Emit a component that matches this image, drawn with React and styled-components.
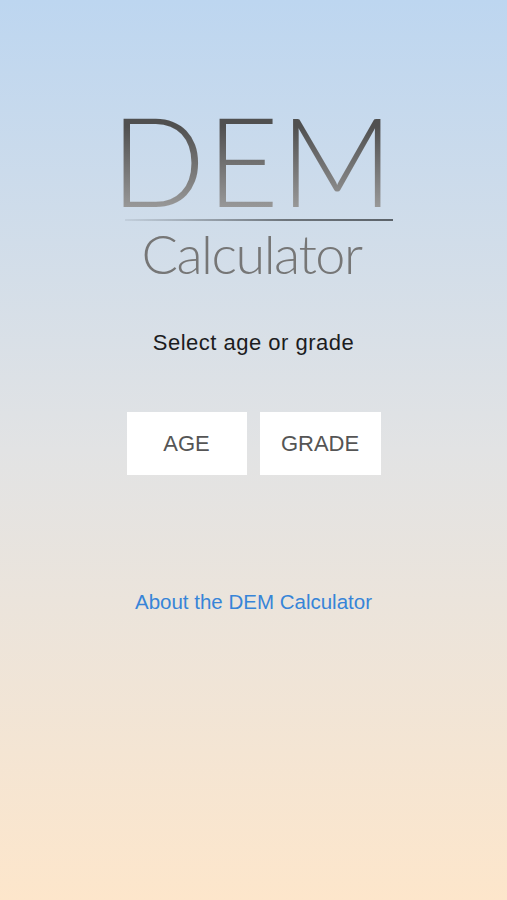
import React from "react";
import styled, { createGlobalStyle } from "styled-components";

const Global = createGlobalStyle`
  html, body { margin: 0; padding: 0; }
  body { font-family: "Liberation Sans", Arial, sans-serif; }
`;

const Screen = styled.div`
  width: 507px;
  height: 900px;
  background: linear-gradient(180deg, #bdd6f0 0%, #e2e3e4 50%, #fde6cb 100%);
  display: flex;
  flex-direction: column;
  align-items: center;
  box-sizing: border-box;
  padding-top: 104px;
`;

const Logo = styled.div`
  display: flex;
  flex-direction: column;
  align-items: center;
  width: 272px;
  margin-left: 6px;
`;

const Big = styled.div`
  font-family: "Lato", sans-serif;
  font-weight: 300;
  font-size: 125px;
  line-height: 111px;
  letter-spacing: 1px;
  margin-left: -8px;
  background: linear-gradient(180deg, #505050 20%, #9a9a9a 95%);
  -webkit-background-clip: text;
  background-clip: text;
  color: transparent;
`;

const Rule = styled.div`
  width: 268px;
  height: 2px;
  margin-top: 4px;
  margin-left: 4px;
  background: linear-gradient(90deg, rgba(120,130,140,0.15) 0%, #6e757c 60%, #5c636a 100%);
`;

const Small = styled.div`
  font-family: "Lato", sans-serif;
  font-weight: 300;
  font-size: 54px;
  line-height: 58px;
  letter-spacing: -1.5px;
  color: #767676;
  margin-top: 4px;
  margin-left: -10px;
`;

const Prompt = styled.div`
  margin-top: 47px;
  font-size: 22px;
  letter-spacing: 0.5px;
  color: #1c1c1e;
`;

const Buttons = styled.div`
  display: flex;
  gap: 13px;
  margin-top: 56px;
`;

const Choice = styled.button`
  width: ${(p) => p.$w}px;
  height: 63px;
  border: none;
  background: #fff;
  font-family: "Liberation Sans", Arial, sans-serif;
  font-size: 22px;
  color: #555;
  padding: 0;
`;

const Link = styled.a`
  margin-top: 115px;
  font-size: 20.5px;
  color: #3784d8;
  text-decoration: none;
`;

export default function App() {
  return (
    <>
      <Global />
      <Screen>
        <Logo>
          <Big>DEM</Big>
          <Rule />
          <Small>Calculator</Small>
        </Logo>
        <Prompt>Select age or grade</Prompt>
        <Buttons>
          <Choice $w={120}>AGE</Choice>
          <Choice $w={121}>GRADE</Choice>
        </Buttons>
        <Link>About the DEM Calculator</Link>
      </Screen>
    </>
  );
}
